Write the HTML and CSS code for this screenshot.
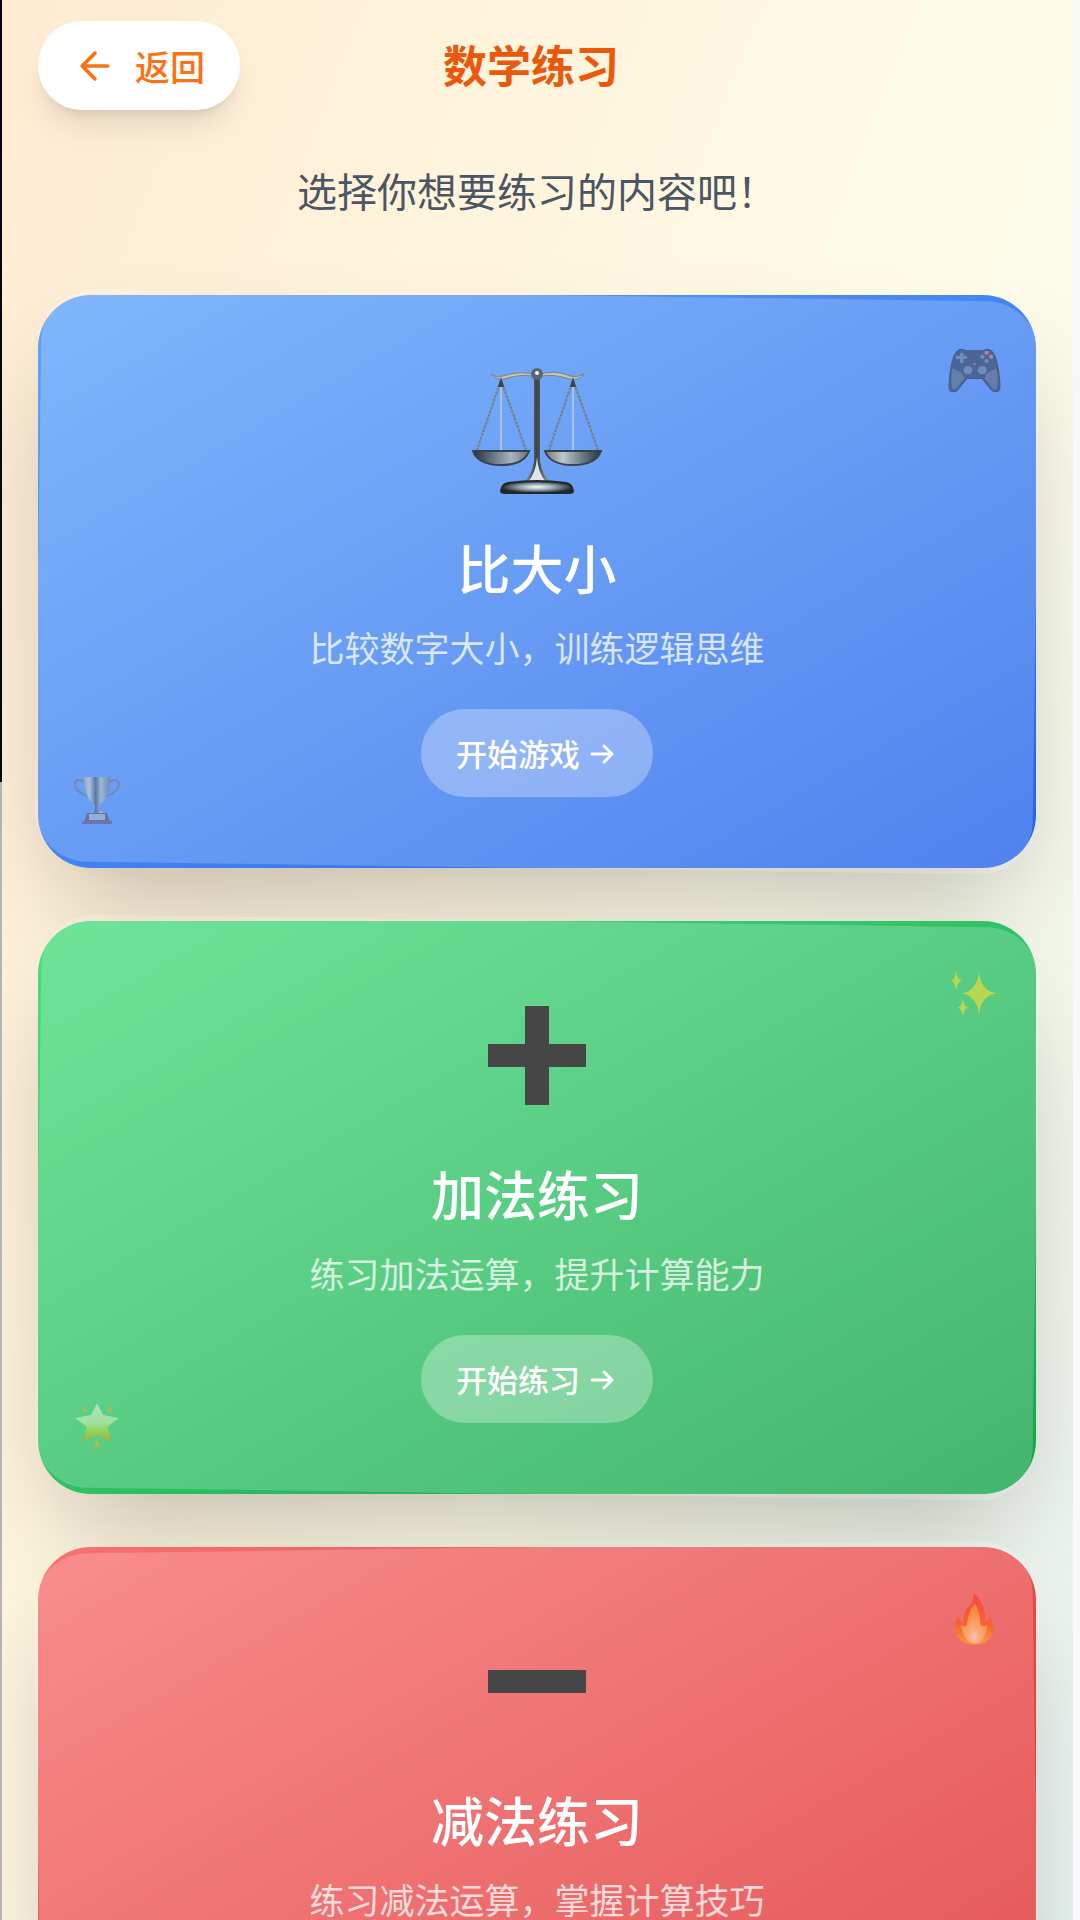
FILE: index.html
```html
<!DOCTYPE html>
<html lang="zh-CN">
<head>
<meta charset="utf-8">
<meta name="viewport" content="width=device-width, initial-scale=1">
<title>数学练习</title>
<link rel="stylesheet" href="styles.css">
</head>
<body>
<svg class="defs" aria-hidden="true">
  <defs>
    <linearGradient id="pole" x1="0" x2="1" y1="0" y2="0"><stop offset="0" stop-color="#8d989f"/><stop offset=".5" stop-color="#39434a"/><stop offset="1" stop-color="#99a3a6"/></linearGradient>
    <linearGradient id="pan" x1="0" x2="1" y1="0" y2="0"><stop offset="0" stop-color="#26323d"/><stop offset=".3" stop-color="#a4b4c0"/><stop offset=".5" stop-color="#55514b"/><stop offset=".7" stop-color="#bac8cf"/><stop offset="1" stop-color="#26323d"/></linearGradient>
    <radialGradient id="base"><stop offset="0" stop-color="#f4fbff"/><stop offset=".5" stop-color="#93a4b0"/><stop offset="1" stop-color="#20282d"/></radialGradient>
    <linearGradient id="cup" x1="0" x2="1" y1="0" y2="0"><stop offset="0" stop-color="#a6aaa4"/><stop offset=".2" stop-color="#d5dbd5"/><stop offset=".45" stop-color="#53606e"/><stop offset=".65" stop-color="#c0c7c4"/><stop offset="1" stop-color="#747d80"/></linearGradient>
    <linearGradient id="gold" x1="0" x2="0" y1="0" y2="1"><stop offset="0" stop-color="#e6eee0"/><stop offset=".5" stop-color="#ccf0b0"/><stop offset=".75" stop-color="#b6d33a"/><stop offset="1" stop-color="#e48a24"/></linearGradient>
    <linearGradient id="flame" x1="0" x2="0" y1="0" y2="1"><stop offset="0" stop-color="#f83c28"/><stop offset=".6" stop-color="#ff5b1d"/><stop offset="1" stop-color="#ffae20"/></linearGradient>
    <radialGradient id="ember" cx=".5" cy=".85" r=".7"><stop offset="0" stop-color="#ffe0dc"/><stop offset=".3" stop-color="#ffc77a"/><stop offset="1" stop-color="#ff9134"/></radialGradient>
  </defs>
</svg>
<main class="page">
  <header class="topbar">
    <button class="back" type="button">
      <svg class="back-icon" viewBox="0 0 24 24" aria-hidden="true"><path d="M19 12H5M12 19l-7-7 7-7"/></svg>
      返回
    </button>
    <h1 class="heading">数学练习</h1>
    <span class="topbar-end"></span>
  </header>
  <p class="intro">选择你想要练习的内容吧！</p>

  <div class="cards">
    <section class="card card-blue">
      <svg class="corner corner-top" viewBox="0 0 48 48" aria-hidden="true">
        <g transform="translate(0 6) scale(1 .93)">
          <path d="M9 3q2-2 5-1l3 1h14l3-1q3-1 5 1 4 3 6 15 2 12 2 20 0 5-4 5-3 0-6-5l-6-8H17l-6 8q-3 5-6 5-4 0-4-5 0-8 2-20Q5 6 9 3Z" fill="#40516c" stroke="#344664"/>
          <path d="m4 20 9 5 2 5-7 9q-2 3-4 1-2-9 0-20ZM44 20l-9 5-2 5 7 9q2 3 4 1 2-9 0-20Z" fill="#65748a"/>
          <g fill="#7487a3"><circle cx="18" cy="22" r="4"/><circle cx="31" cy="22" r="4"/><path d="M11 5h3v3h3v3h-3v4h-3v-4H7V8h4Z"/><circle cx="31" cy="9" r="2"/><circle cx="35" cy="13" r="2"/></g>
          <g fill="#f1736c"><circle cx="35" cy="5" r="2"/><circle cx="39" cy="9" r="2"/><circle cx="24" cy="16" r="1"/></g>
        </g>
      </svg>
      <svg class="emblem" viewBox="0 0 132 132" aria-hidden="true">
        <path d="M20 9q5 4 12 2 18-6 34-1 18-6 33 1 8 2 14-2-4 7-15 5-16-6-32-2-16-4-32 2Q25 15 20 9Z" fill="#c3c3b9" stroke="#77828a"/>
        <path d="M30 12v74M102 12v74" stroke="#a9c2de" stroke-width="2"/>
        <path d="M30 15 6 85M30 15l25 70M102 15 78 85M102 15l25 70" fill="none" stroke="#747f8b" stroke-width="2" stroke-dasharray="3 1"/>
        <path d="m27 22 3-10 3 10ZM99 22l3-10 3 10Z" fill="#39424a"/>
        <path d="M63 14h6v82q2 14 11 22H52q9-8 11-22Z" fill="url(#pole)"/>
        <path d="M66 92q-1 16-9 25h18q-8-9-9-25Z" fill="#dce5ea"/>
        <circle cx="66" cy="9" r="6" fill="#596671"/><circle cx="66" cy="8" r="2" fill="#edf5ff"/>
        <path d="M2 86h56q-5 14-28 14Q7 100 2 86ZM74 86h56q-5 14-28 14-23 0-28-14Z" fill="url(#pan)" stroke="#35434d" stroke-width="2"/>
        <path d="M37 118q29-4 58 0 6 1 7 8 0 2-4 2H34q-4 0-4-2 1-7 7-8Z" fill="url(#base)" stroke="#20282d" stroke-width="2"/>
      </svg>
      <h2 class="card-title">比大小</h2>
      <p class="card-text">比较数字大小，训练逻辑思维</p>
      <button class="start" type="button">开始游戏<svg class="start-icon" viewBox="0 0 30 30" aria-hidden="true"><path d="M4 16h20M16 8l8 8-8 8"/></svg></button>
      <svg class="corner corner-bottom" viewBox="0 0 48 48" aria-hidden="true">
        <path d="M12 6Q3 1 2 8q0 8 13 12M36 6q9-5 10 2 0 8-13 12" fill="none" stroke="#727f89" stroke-width="2"/>
        <path d="M11 1h26q0 21-11 28v6h4v4H18v-4h4v-6Q11 22 11 1Z" fill="url(#cup)"/>
        <path d="M14 37h20l3 9H11Z" fill="#665775"/><path d="M16 38h16v6H16Z" fill="#aebbc4"/><path d="M9 45h30v3H9Z" fill="#745a78"/>
      </svg>
    </section>

    <section class="card card-green">
      <svg class="corner corner-top" viewBox="0 0 48 48" aria-hidden="true">
        <path transform="translate(3 2) scale(.87)" d="M29 2q1 20 18 23-17 3-18 23-2-20-18-23Q27 22 29 2ZM5 1q1 10 6 11-5 1-6 11-1-10-5-11 4-1 5-11ZM12 31q1 8 6 9-5 1-6 9-1-8-5-9 4-1 5-9Z" fill="#e2dc3c"/>
      </svg>
      <svg class="emblem" viewBox="0 0 132 132" aria-hidden="true"><path d="M54 15h24v38h37v23H78v38H54V76H17V53h37Z" fill="#464646"/></svg>
      <h2 class="card-title">加法练习</h2>
      <p class="card-text">练习加法运算，提升计算能力</p>
      <button class="start" type="button">开始练习<svg class="start-icon" viewBox="0 0 30 30" aria-hidden="true"><path d="M4 16h20M16 8l8 8-8 8"/></svg></button>
      <svg class="corner corner-bottom" viewBox="0 0 48 48" aria-hidden="true">
        <path d="m24 1 6 12 16 3-12 9 5 15-15-7-15 7 5-15-12-9 16-3Z" fill="url(#gold)"/>
        <path d="m8 2 7 7-4 1Zm32 0-7 7 5 1ZM24 37l4 8h-8Z" fill="#d8b52c"/>
      </svg>
    </section>

    <section class="card card-red">
      <svg class="corner corner-top" viewBox="0 0 48 48" aria-hidden="true">
        <g transform="translate(3 0) scale(.88 .97)">
          <path d="M23 0q12 9 12 27 5-1 4-6 5 7 4 13-2 14-19 14T4 35q-1-7 4-13 0 6 4 6 0-11 6-15 6-6 5-13Z" fill="url(#flame)"/>
          <path d="M24 10q6 7 6 20 5 2 7 0-2 17-13 17T10 30q5 2 6 0 1-12 8-20Z" fill="url(#ember)"/>
        </g>
      </svg>
      <svg class="emblem" viewBox="0 0 132 132" aria-hidden="true"><path d="M17 53h98v23H17Z" fill="#464646"/></svg>
      <h2 class="card-title">减法练习</h2>
      <p class="card-text">练习减法运算，掌握计算技巧</p>
      <button class="start" type="button">开始练习<svg class="start-icon" viewBox="0 0 30 30" aria-hidden="true"><path d="M4 16h20M16 8l8 8-8 8"/></svg></button>
    </section>
  </div>
</main>
</body>
</html>
```
FILE: styles.css
```css
* {
  box-sizing: border-box;
}

html {
  scrollbar-width: none;
}

body {
  margin: 0;
  background: linear-gradient(#08080c 782px, #b4b4b4 782px);
  font-family: "Noto Sans CJK SC", sans-serif;
}

.defs {
  position: absolute;
  width: 0;
  height: 0;
}

.page {
  margin-left: 2px;
  padding: 21px 37px 71px 36px;
  border-right: 7px solid #f8f8fb;
  overflow: hidden;
  background: linear-gradient(to bottom right, #ffebd2, #fffde8 50%, #dfeef4) 0 0 / 100% 2740px;
}

.topbar {
  display: flex;
  align-items: center;
  justify-content: space-between;
}

.topbar-end {
  width: 214px;
}

.back {
  display: flex;
  align-items: center;
  gap: 18px;
  height: 89px;
  padding: 0 35px;
  border: 0;
  border-radius: 44px;
  background: #fff;
  box-shadow: 0 22px 33px -7px rgba(0, 0, 0, 0.1), 0 9px 13px -9px rgba(0, 0, 0, 0.15);
  color: #f97316;
  font: 500 35px/52px "Noto Sans CJK SC", sans-serif;
}

.back-icon {
  width: 44px;
  height: 44px;
  fill: none;
  stroke: currentColor;
  stroke-width: 2;
  stroke-linecap: round;
  stroke-linejoin: round;
}

.heading {
  margin: 0;
  padding-bottom: 4px;
  color: #ea580c;
  font-size: 44px;
  line-height: 64px;
  font-weight: 700;
}

.intro {
  margin: 50px 0 75px;
  color: #4b5563;
  font-size: 40px;
  line-height: 60px;
  text-align: center;
}

.cards {
  display: grid;
  gap: 53px;
}

.card {
  position: relative;
  display: flex;
  flex-direction: column;
  align-items: center;
  padding: 70px 35px 71px;
  border-radius: 53px;
  box-shadow: 0 55px 110px -26px rgba(0, 0, 0, 0.25);
  color: #fff;
}

/* translucent sheet, tilted slightly over each card */
.card::before {
  content: "";
  position: absolute;
  inset: 0;
  border-radius: 53px;
  background: rgba(255, 255, 255, 0.2);
  transform: rotate(0.8deg);
}

.card > * {
  position: relative;
}

.card-blue {
  background: linear-gradient(to bottom right, #60a5fa, #2563eb);
}

.card-green {
  background: linear-gradient(to bottom right, #4ade80, #16a34a);
}

.card-red {
  background: linear-gradient(to bottom right, #f87171, #dc2626);
}

.card-red::before {
  transform: rotate(-0.8deg);
}

.emblem {
  width: 132px;
  height: 132px;
}

.card-title {
  margin: 38px 0 22px;
  font-size: 53px;
  line-height: 64px;
  font-weight: 500;
}

.card-text {
  margin: 0 0 36px;
  font-size: 35px;
  line-height: 52px;
  font-weight: 400;
  opacity: 0.75;
}

.start {
  display: flex;
  align-items: center;
  gap: 8px;
  height: 88px;
  padding: 0 35px;
  border: 0;
  border-radius: 44px;
  background: rgba(255, 255, 255, 0.3);
  color: #fff;
  font: 500 31px/44px "Noto Sans CJK SC", sans-serif;
}

.start-icon {
  width: 30px;
  height: 30px;
  fill: none;
  stroke: currentColor;
  stroke-width: 3;
  stroke-linecap: round;
  stroke-linejoin: round;
}

.card > .corner {
  position: absolute;
}

.card > .corner-top {
  top: 46px;
  right: 35px;
  width: 53px;
  height: 53px;
  opacity: 0.7;
}

.card > .corner-bottom {
  bottom: 44px;
  left: 35px;
  width: 48px;
  height: 48px;
  opacity: 0.6;
}
```
